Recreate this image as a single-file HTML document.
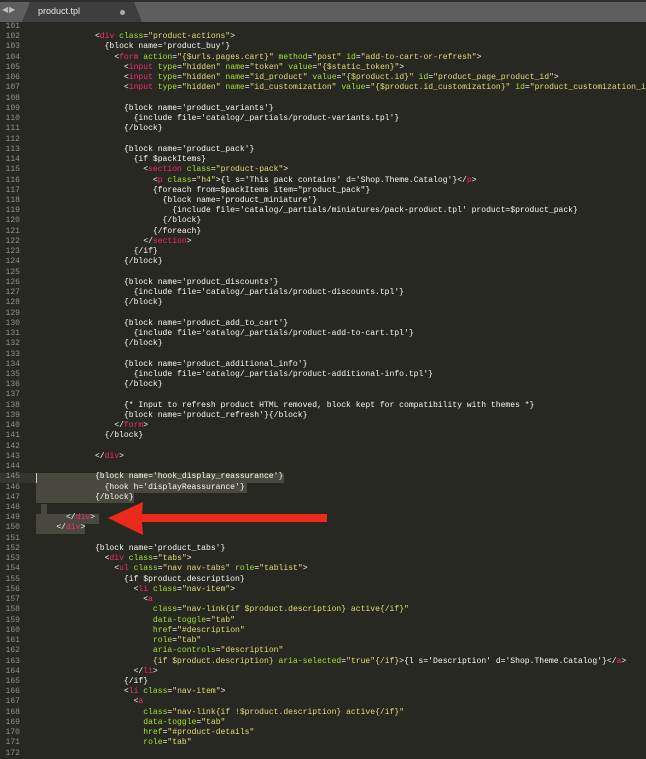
<!DOCTYPE html>
<html><head><meta charset="utf-8"><style>
html,body{margin:0;padding:0;width:646px;height:750px;overflow:hidden;background:#272822}
#bar{position:absolute;left:0;top:0;width:646px;height:22px;background:#5e5e5e;border-top:2px solid #2e2e2e;box-sizing:border-box}
#tab{position:absolute;left:22px;top:2px;width:120px;height:20px;background:#3e3e3e;clip-path:polygon(8px 0,112px 0,120px 100%,0 100%)}
#tabt{position:absolute;left:38px;top:6px;font:9px "Liberation Sans",sans-serif;color:#e8e8e8}
#dot{position:absolute;left:120px;top:10px;width:5px;height:5px;border-radius:50%;background:#aaa}
#nav{position:absolute;left:2px;top:5px;font:8px "Liberation Sans",sans-serif;color:#bbb;letter-spacing:1px}
pre{margin:0;font-family:"Liberation Mono",monospace;font-size:8.05px;line-height:10.24px;position:absolute;top:22px;color:#f8f8f2}
#g{left:0;width:20px;text-align:right;color:#8f908a}
#c{left:37px}
.t{color:#f92672}.a{color:#a6e22e}.s{color:#e6db74}
.sel{position:absolute;background:#49483e;height:10.24px}
</style></head><body>
<div class="sel" style="left:0;top:473px;width:36px;background:#34352f"></div>
<div class="sel" style="left:36px;top:473px;width:248px"></div>
<div class="sel" style="left:36px;top:483px;width:211px"></div>
<div class="sel" style="left:36px;top:493px;width:98px"></div>
<div class="sel" style="left:41px;top:504px;width:6px"></div>
<div class="sel" style="left:36px;top:514px;width:63px"></div>
<div class="sel" style="left:36px;top:524px;width:49px"></div>
<div style="position:absolute;left:36px;top:473px;width:1px;height:10px;background:#ccc"></div>
<div id="bar"></div><div id="tab"></div><div id="tabt">product.tpl</div><div id="dot"></div><div id="nav">◀▶</div>
<pre id="g">101
102
103
104
105
106
107
108
109
110
111
112
113
114
115
116
117
118
119
120
121
122
123
124
125
126
127
128
129
130
131
132
133
134
135
136
137
138
139
140
141
142
143
144
145
146
147
148
149
150
151
152
153
154
155
156
157
158
159
160
161
162
163
164
165
166
167
168
169
170
171
172</pre>
<pre id="c">

            &lt;<span class="t">div</span> <span class="a">class</span>=<span class="s">"product-actions"</span>&gt;
              {block name='product_buy'}
                &lt;<span class="t">form</span> <span class="a">action</span>=<span class="s">"{$urls.pages.cart}"</span> <span class="a">method</span>=<span class="s">"post"</span> <span class="a">id</span>=<span class="s">"add-to-cart-or-refresh"</span>&gt;
                  &lt;<span class="t">input</span> <span class="a">type</span>=<span class="s">"hidden"</span> <span class="a">name</span>=<span class="s">"token"</span> <span class="a">value</span>=<span class="s">"{$static_token}"</span>&gt;
                  &lt;<span class="t">input</span> <span class="a">type</span>=<span class="s">"hidden"</span> <span class="a">name</span>=<span class="s">"id_product"</span> <span class="a">value</span>=<span class="s">"{$product.id}"</span> <span class="a">id</span>=<span class="s">"product_page_product_id"</span>&gt;
                  &lt;<span class="t">input</span> <span class="a">type</span>=<span class="s">"hidden"</span> <span class="a">name</span>=<span class="s">"id_customization"</span> <span class="a">value</span>=<span class="s">"{$product.id_customization}"</span> <span class="a">id</span>=<span class="s">"product_customization_id"</span>&gt;

                  {block name='product_variants'}
                    {include file='catalog/_partials/product-variants.tpl'}
                  {/block}

                  {block name='product_pack'}
                    {if $packItems}
                      &lt;<span class="t">section</span> <span class="a">class</span>=<span class="s">"product-pack"</span>&gt;
                        &lt;<span class="t">p</span> <span class="a">class</span>=<span class="s">"h4"</span>&gt;{l s='This pack contains' d='Shop.Theme.Catalog'}&lt;/<span class="t">p</span>&gt;
                        {foreach from=$packItems item="product_pack"}
                          {block name='product_miniature'}
                            {include file='catalog/_partials/miniatures/pack-product.tpl' product=$product_pack}
                          {/block}
                        {/foreach}
                      &lt;/<span class="t">section</span>&gt;
                    {/if}
                  {/block}

                  {block name='product_discounts'}
                    {include file='catalog/_partials/product-discounts.tpl'}
                  {/block}

                  {block name='product_add_to_cart'}
                    {include file='catalog/_partials/product-add-to-cart.tpl'}
                  {/block}

                  {block name='product_additional_info'}
                    {include file='catalog/_partials/product-additional-info.tpl'}
                  {/block}

                  {* Input to refresh product HTML removed, block kept for compatibility with themes *}
                  {block name='product_refresh'}{/block}
                &lt;/<span class="t">form</span>&gt;
              {/block}

            &lt;/<span class="t">div</span>&gt;

            {block name='hook_display_reassurance'}
              {hook h='displayReassurance'}
            {/block}

      &lt;/<span class="t">div</span>&gt;
    &lt;/<span class="t">div</span>&gt;

            {block name='product_tabs'}
              &lt;<span class="t">div</span> <span class="a">class</span>=<span class="s">"tabs"</span>&gt;
                &lt;<span class="t">ul</span> <span class="a">class</span>=<span class="s">"nav nav-tabs"</span> <span class="a">role</span>=<span class="s">"tablist"</span>&gt;
                  {if $product.description}
                    &lt;<span class="t">li</span> <span class="a">class</span>=<span class="s">"nav-item"</span>&gt;
                      &lt;<span class="t">a</span>
                        <span class="a">class</span>=<span class="s">"nav-link{if $product.description} active{/if}"</span>
                        <span class="a">data-toggle</span>=<span class="s">"tab"</span>
                        <span class="a">href</span>=<span class="s">"#description"</span>
                        <span class="a">role</span>=<span class="s">"tab"</span>
                        <span class="a">aria-controls</span>=<span class="s">"description"</span>
                        <span class="s">{if $product.description}</span> <span class="a">aria-selected</span>=<span class="s">"true"{/if}</span>&gt;{l s='Description' d='Shop.Theme.Catalog'}&lt;/<span class="t">a</span>&gt;
                    &lt;/<span class="t">li</span>&gt;
                  {/if}
                  &lt;<span class="t">li</span> <span class="a">class</span>=<span class="s">"nav-item"</span>&gt;
                    &lt;<span class="t">a</span>
                      <span class="a">class</span>=<span class="s">"nav-link{if !$product.description} active{/if}"</span>
                      <span class="a">data-toggle</span>=<span class="s">"tab"</span>
                      <span class="a">href</span>=<span class="s">"#product-details"</span>
                      <span class="a">role</span>=<span class="s">"tab"</span>
</pre>
<svg style="position:absolute;left:0;top:0" width="646" height="750"><path d="M108 518 L143 502 L142 514 L327 514 L327 522 L142 522 L143 535 Z" fill="#ec2a1c"/></svg>
</body></html>
